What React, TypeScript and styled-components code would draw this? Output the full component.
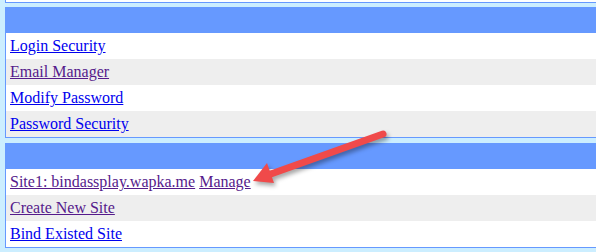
import styled, { createGlobalStyle } from "styled-components";

const GlobalStyle = createGlobalStyle`
  html, body {
    margin: 0;
    padding: 0;
    background: #cceeff;
    overflow: hidden;
  }
  body {
    font-family: "Liberation Serif", "Times New Roman", serif;
    font-size: 16px;
  }
`;

type Item = {
  label: string;
  visited?: boolean;
  extra?: string;
};

const accountItems: Item[] = [
  { label: "Login Security" },
  { label: "Email Manager", visited: true },
  { label: "Modify Password" },
  { label: "Password Security" },
];

const siteItems: Item[] = [
  { label: "Site1: bindassplay.wapka.me", visited: true, extra: "Manage" },
  { label: "Create New Site", visited: true },
  { label: "Bind Existed Site" },
];

export default function App() {
  return (
    <>
      <GlobalStyle />
      <Page>
        <Panel $cut>
          <Row $alt={false} />
        </Panel>
        <Panel>
          <Header />
          {accountItems.map((item, i) => (
            <Row key={item.label} $alt={i % 2 === 1}>
              <Link href="#" $visited={item.visited}>
                {item.label}
              </Link>
            </Row>
          ))}
        </Panel>
        <Panel>
          <Header />
          {siteItems.map((item, i) => (
            <Row key={item.label} $alt={i % 2 === 1}>
              <Link href="#" $visited={item.visited}>
                {item.label}
              </Link>
              {item.extra && (
                <>
                  {" "}
                  <Link href="#" $visited>
                    {item.extra}
                  </Link>
                </>
              )}
            </Row>
          ))}
        </Panel>
        <Arrow viewBox="0 0 596 252" width="596" height="252">
          <line
            x1="383"
            y1="134"
            x2="268"
            y2="175"
            stroke="#f04a4a"
            strokeWidth="7"
            strokeLinecap="round"
          />
          <polygon points="253,181 267,163 274,183" fill="#f04a4a" />
        </Arrow>
      </Page>
    </>
  );
}

const Page = styled.div`
  position: relative;
  display: flex;
  flex-direction: column;
  gap: 4px;
  padding-left: 5px;
  width: 620px;
`;

const Panel = styled.div<{ $cut?: boolean }>`
  display: flex;
  flex-direction: column;
  border: 1px solid #6699ff;
  background: #ffffff;
  margin-top: ${({ $cut }) => ($cut ? "-25px" : "0")};
  & + & + & {
    margin-top: 1px;
  }
`;

const Header = styled.div`
  height: 25px;
  background: #6699ff;
`;

const Row = styled.div<{ $alt: boolean }>`
  height: 26px;
  box-sizing: border-box;
  padding: 3px 4px 0;
  line-height: 20px;
  white-space: nowrap;
  background: ${({ $alt }) => ($alt ? "#eeeeee" : "#ffffff")};
`;

const Link = styled.a<{ $visited?: boolean }>`
  color: ${({ $visited }) => ($visited ? "#551a8b" : "#0000ee")};
  text-decoration: underline;
`;

const Arrow = styled.svg`
  position: absolute;
  left: 0;
  top: 0;
  pointer-events: none;
  filter: drop-shadow(2px 3px 2px rgba(0, 0, 0, 0.35));
`;
